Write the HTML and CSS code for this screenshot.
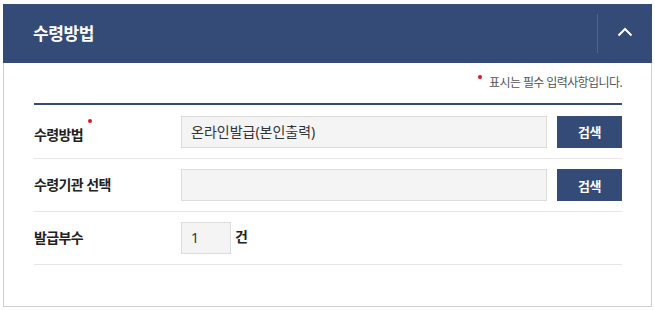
FILE: index.html
```html
<!DOCTYPE html>
<html lang="ko">
<head>
<meta charset="utf-8">
<link rel="stylesheet" href="styles.css">
</head>
<body>
<section class="panel">
  <header class="panel-head">
    <h2 class="panel-title">수령방법</h2>
    <button class="toggle" type="button" aria-label="접기">
      <svg width="16" height="10" viewBox="0 0 16 10"><polyline points="1.5,8.5 8,2 14.5,8.5" fill="none" stroke="#fff" stroke-width="2"/></svg>
    </button>
  </header>
  <div class="panel-body">
    <p class="req-note"><span class="dot"></span>표시는 필수 입력사항입니다.</p>
    <div class="form">
      <div class="row">
        <div class="label">수령방법<span class="dot dot-label"></span></div>
        <div class="field">
          <div class="input wide">온라인발급(본인출력)</div>
          <button class="btn" type="button">검색</button>
        </div>
      </div>
      <div class="row">
        <div class="label">수령기관 선택</div>
        <div class="field">
          <div class="input wide"></div>
          <button class="btn" type="button">검색</button>
        </div>
      </div>
      <div class="row">
        <div class="label">발급부수</div>
        <div class="field">
          <div class="input small">1</div>
          <span class="unit">건</span>
        </div>
      </div>
    </div>
  </div>
</section>
</body>
</html>
```
FILE: styles.css
```css
* { box-sizing: border-box; }
html, body { margin: 0; padding: 0; background: #fff; }
body {
  font-family: "Noto Sans", "Noto Sans CJK KR", sans-serif;
  color: #222;
}
.panel {
  width: 649px;
  margin: 4px 0 0 3px;
}
.panel-head {
  height: 59px;
  background: #344b77;
  display: flex;
  align-items: center;
  justify-content: space-between;
  padding-left: 30px;
}
.panel-title {
  margin: 0;
  font-size: 17px;
  line-height: 20px;
  font-weight: 700;
  color: #fff;
  letter-spacing: -0.4px;
}
.toggle {
  width: 55px;
  height: 39px;
  border: 0;
  border-left: 1px solid rgba(255,255,255,0.14);
  background: transparent;
  padding: 0 0 3px 0;
  display: flex;
  align-items: center;
  justify-content: center;
}
.toggle svg { display: block; }
.panel-body {
  border: 1px solid #cfcfcf;
  border-top: 0;
  padding: 12px 29px 41px 30px;
}
.req-note {
  margin: 0 0 12px;
  text-align: right;
  font-size: 12px;
  line-height: 16px;
  color: #555;
  letter-spacing: -0.6px;
}
.dot {
  display: inline-block;
  width: 4px;
  height: 4px;
  border-radius: 50%;
  background: #e0141e;
  vertical-align: top;
  margin-right: 7px;
}
.form { border-top: 2px solid #344b77; }
.row {
  height: 53px;
  border-bottom: 1px solid #e6e6e6;
  display: flex;
  align-items: center;
}
.row:first-child { height: 54px; }
.label {
  width: 147px;
  font-size: 14px;
  font-weight: 700;
  color: #222;
  letter-spacing: -0.6px;
  line-height: 18px;
}
.dot-label {
  vertical-align: 17px;
  margin: 0 0 0 5px;
}
.field {
  flex: 1;
  display: flex;
  align-items: center;
  gap: 10px;
}
.input {
  height: 32px;
  background: #f4f4f4;
  border: 1px solid #dcdcdc;
  padding: 0 9px;
  font-size: 14px;
  line-height: 30px;
  color: #333;
}
.input.wide { flex: 1; }
.input.small { width: 50px; }
.btn {
  width: 65px;
  height: 32px;
  border: 0;
  background: #344b77;
  color: #fff;
  font-family: inherit;
  font-size: 13px;
  font-weight: 700;
  letter-spacing: -0.5px;
  padding: 0;
}
.unit {
  margin-left: -6px;
  font-size: 14px;
  font-weight: 700;
  line-height: 18px;
  align-self: flex-start;
  margin-top: 6px;
}
```
